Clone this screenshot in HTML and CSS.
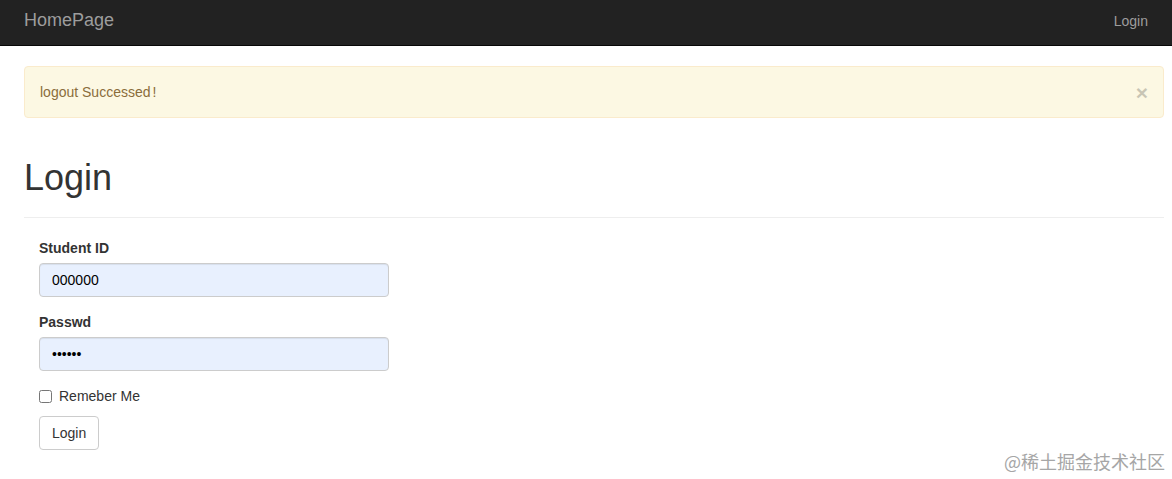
FILE: index.html
```html
<!DOCTYPE html>
<html lang="en">
<head>
<meta charset="utf-8">
<title>Login</title>
<link rel="stylesheet" href="styles.css">
</head>
<body>
<nav class="navbar">
  <a class="brand" href="#">HomePage</a>
  <a class="nav-link" href="#">Login</a>
</nav>
<main class="container">
  <div class="alert">
    <span>logout Successed<span class="bang">!</span></span>
    <button class="close" type="button" aria-label="Close">&times;</button>
  </div>
  <div class="page-header">
    <h1>Login</h1>
  </div>
  <form class="form">
    <div class="form-group">
      <label class="field-label" for="sid">Student ID</label>
      <input class="form-control" id="sid" type="text" value="000000">
    </div>
    <div class="form-group">
      <label class="field-label" for="pw">Passwd</label>
      <input class="form-control" id="pw" type="password" value="123456">
    </div>
    <div class="checkbox">
      <label class="check-label"><input type="checkbox" class="check"> Remeber Me</label>
    </div>
    <button type="button" class="btn">Login</button>
  </form>
</main>
<div class="watermark">@稀土掘金技术社区</div>
</body>
</html>
```
FILE: styles.css
```css
* { box-sizing: border-box; }
html, body { margin: 0; padding: 0; }
body {
  font-family: "Liberation Sans", Arial, sans-serif;
  font-size: 14px;
  line-height: 20px;
  color: #333;
  background: #fff;
  position: relative;
  height: 479px;
  overflow: hidden;
}
.navbar {
  display: flex;
  justify-content: space-between;
  align-items: flex-start;
  height: 46px;
  background: #222;
  border-bottom: 1px solid #080808;
  padding: 0 24px;
}
.brand {
  color: #9d9d9d;
  font-size: 18px;
  line-height: 20px;
  text-decoration: none;
  padding-top: 10px;
}
.nav-link {
  color: #9d9d9d;
  text-decoration: none;
  font-size: 14px;
  line-height: 20px;
  padding-top: 11px;
}
.container {
  padding: 20px 8px 0 24px;
}
.alert {
  display: flex;
  justify-content: space-between;
  align-items: center;
  height: 52px;
  padding: 0 15px;
  background: #fcf8e3;
  border: 1px solid #faebcc;
  border-radius: 4px;
  color: #8a6d3b;
  margin-bottom: 20px;
}
.bang {
  margin-left: 2px;
}
.close {
  background: none;
  border: 0;
  padding: 0;
  font-family: "Liberation Sans", Arial, sans-serif;
  font-size: 21px;
  font-weight: bold;
  line-height: 1;
  color: #000;
  opacity: 0.2;
  margin-right: 0;
  cursor: pointer;
}
.page-header {
  border-bottom: 1px solid #eee;
  padding-bottom: 9px;
  margin-bottom: 20px;
}
.page-header h1 {
  margin: 0 0 10px;
  padding-top: 20px;
  font-size: 36px;
  font-weight: 500;
  line-height: 39.6px;
  color: #333;
}
.form {
  padding-left: 15px;
}
.form-group {
  margin-bottom: 15px;
}
.field-label {
  display: block;
  font-weight: bold;
  margin-bottom: 5px;
}
.form-control {
  display: block;
  width: 350px;
  height: 34px;
  padding: 6px 12px;
  font-family: "Liberation Sans", Arial, sans-serif;
  font-size: 14px;
  color: #000;
  background: #e8f0fe;
  border: 1px solid #ccc;
  border-radius: 4px;
  box-shadow: inset 0 1px 1px rgba(0,0,0,.075);
}
.checkbox {
  margin-bottom: 10px;
}
.check-label {
  display: flex;
  align-items: center;
  gap: 7px;
  height: 20px;
}
.check {
  margin: 1px 0 0;
  width: 13px;
  height: 13px;
}
.btn {
  display: block;
  height: 34px;
  padding: 6px 12px;
  font-family: "Liberation Sans", Arial, sans-serif;
  font-size: 14px;
  line-height: 20px;
  color: #333;
  background: #fff;
  border: 1px solid #ccc;
  border-radius: 4px;
}
.watermark {
  position: absolute;
  right: 7px;
  bottom: 6px;
  font-family: "Noto Sans CJK SC", "Liberation Sans", sans-serif;
  font-size: 18px;
  line-height: 24px;
  color: #a6a6a6;
}
```
